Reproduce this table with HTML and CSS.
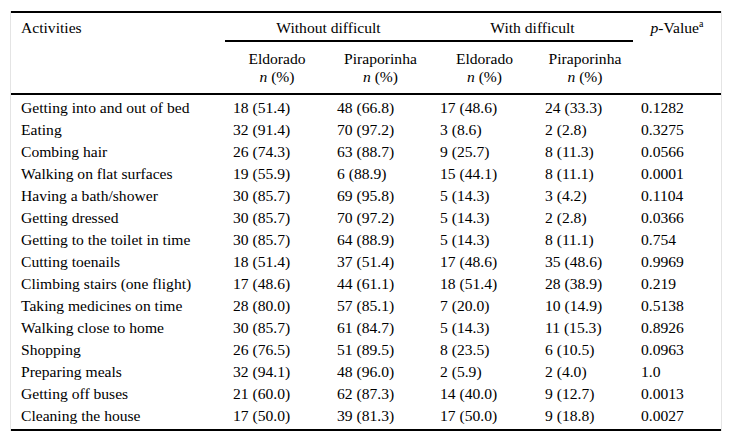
FILE: index.html
```html
<!DOCTYPE html>
<html>
<head>
<meta charset="utf-8">
<link rel="stylesheet" href="styles.css">
</head>
<body>
<div class="frame">
<table class="data">
<colgroup>
<col class="c1"><col class="c2"><col class="c3"><col class="c4"><col class="c5"><col class="c6">
</colgroup>
<thead>
<tr class="h1">
<th rowspan="2" class="act">Activities</th>
<th colspan="2" class="grp">Without difficult</th>
<th colspan="2" class="grp">With difficult</th>
<th rowspan="2" class="pv"><i>p</i>-Value<sup>a</sup></th>
</tr>
<tr class="h2">
<th class="sub">Eldorado<br><i>n</i> (%)</th>
<th class="sub">Piraporinha<br><i>n</i> (%)</th>
<th class="sub">Eldorado<br><i>n</i> (%)</th>
<th class="sub">Piraporinha<br><i>n</i> (%)</th>
</tr>
</thead>
<tbody>
<tr><td>Getting into and out of bed</td><td>18 (51.4)</td><td>48 (66.8)</td><td>17 (48.6)</td><td>24 (33.3)</td><td>0.1282</td></tr>
<tr><td>Eating</td><td>32 (91.4)</td><td>70 (97.2)</td><td>3 (8.6)</td><td>2 (2.8)</td><td>0.3275</td></tr>
<tr><td>Combing hair</td><td>26 (74.3)</td><td>63 (88.7)</td><td>9 (25.7)</td><td>8 (11.3)</td><td>0.0566</td></tr>
<tr><td>Walking on flat surfaces</td><td>19 (55.9)</td><td>6 (88.9)</td><td>15 (44.1)</td><td>8 (11.1)</td><td>0.0001</td></tr>
<tr><td>Having a bath/shower</td><td>30 (85.7)</td><td>69 (95.8)</td><td>5 (14.3)</td><td>3 (4.2)</td><td>0.1104</td></tr>
<tr><td>Getting dressed</td><td>30 (85.7)</td><td>70 (97.2)</td><td>5 (14.3)</td><td>2 (2.8)</td><td>0.0366</td></tr>
<tr><td>Getting to the toilet in time</td><td>30 (85.7)</td><td>64 (88.9)</td><td>5 (14.3)</td><td>8 (11.1)</td><td>0.754</td></tr>
<tr><td>Cutting toenails</td><td>18 (51.4)</td><td>37 (51.4)</td><td>17 (48.6)</td><td>35 (48.6)</td><td>0.9969</td></tr>
<tr><td>Climbing stairs (one flight)</td><td>17 (48.6)</td><td>44 (61.1)</td><td>18 (51.4)</td><td>28 (38.9)</td><td>0.219</td></tr>
<tr><td>Taking medicines on time</td><td>28 (80.0)</td><td>57 (85.1)</td><td>7 (20.0)</td><td>10 (14.9)</td><td>0.5138</td></tr>
<tr><td>Walking close to home</td><td>30 (85.7)</td><td>61 (84.7)</td><td>5 (14.3)</td><td>11 (15.3)</td><td>0.8926</td></tr>
<tr><td>Shopping</td><td>26 (76.5)</td><td>51 (89.5)</td><td>8 (23.5)</td><td>6 (10.5)</td><td>0.0963</td></tr>
<tr><td>Preparing meals</td><td>32 (94.1)</td><td>48 (96.0)</td><td>2 (5.9)</td><td>2 (4.0)</td><td>1.0</td></tr>
<tr><td>Getting off buses</td><td>21 (60.0)</td><td>62 (87.3)</td><td>14 (40.0)</td><td>9 (12.7)</td><td>0.0013</td></tr>
<tr class="last"><td>Cleaning the house</td><td>17 (50.0)</td><td>39 (81.3)</td><td>17 (50.0)</td><td>9 (18.8)</td><td>0.0027</td></tr>
</tbody>
</table>
</div>
</body>
</html>
```

FILE: styles.css
```css
html, body {
  margin: 0;
  padding: 0;
  background: #ffffff;
}

body {
  font-family: "Liberation Serif", "Times New Roman", serif;
  font-size: 15.6px;
  color: #000000;
}

.frame {
  margin: 11px 10px 0 10px;
  border-left: 1px solid #e4e4e4;
  border-right: 1px solid #e4e4e4;
}

.data {
  width: 100%;
  border-collapse: collapse;
  table-layout: fixed;
  border-top: 2px solid #000000;
  border-bottom: 2px solid #000000;
}

.c1 { width: 214px; }
.c2 { width: 104px; }
.c3 { width: 103px; }
.c4 { width: 105px; }
.c5 { width: 96px; }
.c6 { width: 88px; }

th {
  font-weight: normal;
  line-height: 18px;
  padding: 0;
  vertical-align: top;
}

.h1 th {
  padding-top: 6px;
  height: 29px;
  box-sizing: border-box;
}

.act {
  text-align: left;
  padding-left: 10px;
}

.pv {
  text-align: center;
}

.pv sup {
  font-size: 10px;
  line-height: 0;
  vertical-align: 6px;
}

.grp {
  text-align: center;
  border-bottom: 2px solid #000000;
}

.h2 th {
  padding: 8px 0 7px 0;
  text-align: center;
}

thead {
  border-bottom: 2px solid #000000;
}

td {
  padding: 0 0 0 8px;
  height: 22px;
  line-height: 18px;
  vertical-align: middle;
  white-space: nowrap;
}

td:first-child {
  padding-left: 10px;
}

tbody tr:first-child td {
  padding-top: 2px;
}

.last td {
  padding-bottom: 2px;
}
```
